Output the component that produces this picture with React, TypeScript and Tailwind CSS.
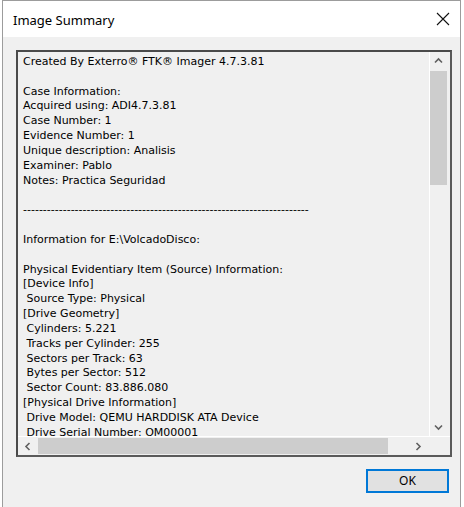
const lines = [
  'Created By Exterro® FTK® Imager 4.7.3.81',
  '',
  'Case Information: ',
  'Acquired using: ADI4.7.3.81',
  'Case Number: 1',
  'Evidence Number: 1',
  'Unique description: Analisis',
  'Examiner: Pablo',
  'Notes: Practica Seguridad',
  '',
  '------------------------------------------------------------------------',
  '',
  'Information for E:\\VolcadoDisco:',
  '',
  'Physical Evidentiary Item (Source) Information:',
  '[Device Info]',
  ' Source Type: Physical',
  '[Drive Geometry]',
  ' Cylinders: 5.221',
  ' Tracks per Cylinder: 255',
  ' Sectors per Track: 63',
  ' Bytes per Sector: 512',
  ' Sector Count: 83.886.080',
  '[Physical Drive Information]',
  ' Drive Model: QEMU HARDDISK ATA Device',
  ' Drive Serial Number: QM00001',
]

function Chevron({ dir }: { dir: 'up' | 'down' | 'left' | 'right' }) {
  const d = {
    up: 'M1 5.5 4.5 2 8 5.5',
    down: 'M1 2.5 4.5 6 8 2.5',
    left: 'M5.5 1 2 4.5 5.5 8',
    right: 'M2.5 1 6 4.5 2.5 8',
  }[dir]
  return (
    <svg width="9" height="9" viewBox="0 0 9 9" fill="none" stroke="#606060" strokeWidth="1.6">
      <path d={d} />
    </svg>
  )
}

export default function App() {
  return (
    <div className="flex h-[507px] w-[464px] bg-white">
      <div className="ml-[2px] flex h-full w-[459px] flex-col border-x border-t border-[#9c9c9c] bg-[#f0f0f0]">
        {/* title bar */}
        <div className="flex h-[36px] items-center justify-between bg-white pl-[10px] pr-[10px]">
          <span className="pt-[3px] text-[13px] text-black [font-family:'Noto_Sans',sans-serif]">
            Image Summary
          </span>
          <svg width="14" height="14" viewBox="0 0 14 14" stroke="#111" strokeWidth="1.1">
            <path d="M1 1 13 13M13 1 1 13" />
          </svg>
        </div>

        {/* summary box */}
        <div className="ml-[13px] mt-[13px] flex h-[407px] w-[436px] flex-col border-2 border-t-[#4a4a4a] border-l-[#4a4a4a] border-r-[#5a5a5a] border-b-[#5a5a5a]">
          <div className="flex h-[384px]">
            <div className="h-full w-[411px] overflow-hidden pl-[5px] pt-[3px]">
              {lines.map((l, i) => (
                <div
                  key={i}
                  className="h-[14.83px] whitespace-pre text-[11px] leading-[14.83px] text-black [font-family:'DejaVu_Sans',sans-serif]"
                >
                  {l}
                </div>
              ))}
            </div>
            <div className="flex h-full w-[21px] flex-col border-l border-white">
              <div className="flex h-[19px] w-[17px] items-center justify-center">
                <Chevron dir="up" />
              </div>
              <div className="h-[114px] w-[17px] bg-[#cdcdcd]" />
              <div className="flex-1" />
              <div className="flex h-[17px] w-[17px] items-center justify-center">
                <Chevron dir="down" />
              </div>
            </div>
          </div>
          <div className="flex h-[19px] border-t border-white">
            <div className="flex w-[20px] items-center justify-center">
              <Chevron dir="left" />
            </div>
            <div className="my-[1px] w-[350px] bg-[#cdcdcd]" />
            <div className="flex w-[41px] items-center justify-end pr-[6px]">
              <Chevron dir="right" />
            </div>
            <div className="flex-1 bg-[#f0f0f0]" />
          </div>
        </div>

        {/* footer */}
        <div className="mr-[11px] mt-[12px] flex justify-end">
          <button
            type="button"
            className="flex h-[24px] w-[83px] items-center justify-center border-2 border-[#0078d7] bg-[#e1e1e1] text-[12px] text-black [font-family:'Noto_Sans',sans-serif]"
          >
            OK
          </button>
        </div>
      </div>
    </div>
  )
}
